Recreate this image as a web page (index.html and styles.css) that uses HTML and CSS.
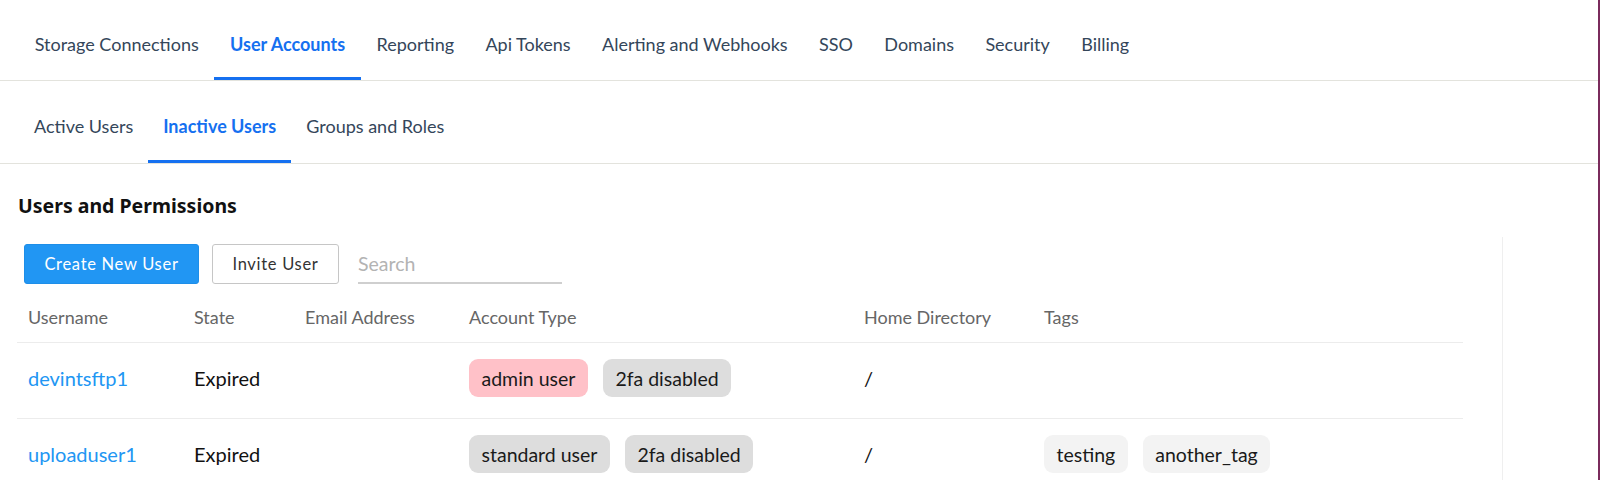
FILE: index.html
```html
<!DOCTYPE html>
<html lang="en">
<head>
<meta charset="utf-8">
<title>User Accounts</title>
<link rel="stylesheet" href="styles.css">
</head>
<body>
<div class="page">
  <div class="main">
    <nav class="tabs tabs-top">
      <a class="tab">Storage Connections</a>
      <a class="tab active">User Accounts</a>
      <a class="tab">Reporting</a>
      <a class="tab">Api Tokens</a>
      <a class="tab">Alerting and Webhooks</a>
      <a class="tab">SSO</a>
      <a class="tab">Domains</a>
      <a class="tab">Security</a>
      <a class="tab">Billing</a>
    </nav>
    <nav class="tabs tabs-sub">
      <a class="tab">Active Users</a>
      <a class="tab active">Inactive Users</a>
      <a class="tab">Groups and Roles</a>
    </nav>
    <section class="content">
      <h2 class="title">Users and Permissions</h2>
      <div class="panel">
        <div class="toolbar">
          <button class="btn btn-primary">Create New User</button>
          <button class="btn btn-outline">Invite User</button>
          <input class="search" type="text" placeholder="Search">
        </div>
        <table class="users">
          <colgroup>
            <col class="c-user"><col class="c-state"><col class="c-email"><col class="c-type"><col class="c-home"><col class="c-tags">
          </colgroup>
          <thead>
            <tr>
              <th>Username</th>
              <th>State</th>
              <th>Email Address</th>
              <th>Account Type</th>
              <th>Home Directory</th>
              <th>Tags</th>
            </tr>
          </thead>
          <tbody>
            <tr>
              <td><a class="user-link">devintsftp1</a></td>
              <td>Expired</td>
              <td></td>
              <td><div class="badges"><span class="badge badge-admin">admin user</span><span class="badge badge-grey">2fa disabled</span></div></td>
              <td>/</td>
              <td></td>
            </tr>
            <tr>
              <td><a class="user-link">uploaduser1</a></td>
              <td>Expired</td>
              <td></td>
              <td><div class="badges"><span class="badge badge-grey">standard user</span><span class="badge badge-grey">2fa disabled</span></div></td>
              <td>/</td>
              <td><div class="badges"><span class="badge badge-tag">testing</span><span class="badge badge-tag">another_tag</span></div></td>
            </tr>
          </tbody>
        </table>
      </div>
    </section>
  </div>
  <div class="edge"></div>
</div>
</body>
</html>
```
FILE: styles.css
```css
* { box-sizing: border-box; }

html, body {
  margin: 0;
  padding: 0;
  background: #ffffff;
}

body {
  font-family: "Lato", "Noto Sans", sans-serif;
  color: #111;
  height: 480px;
  overflow: hidden;
}

.page {
  display: flex;
  width: 1600px;
  height: 480px;
}

.main {
  flex: 1;
  min-width: 0;
}

.edge {
  width: 2px;
  background: #7a2b5c;
}

.tabs {
  display: flex;
  padding-left: 19px;
  border-bottom: 1px solid #e3e3dd;
}

.tabs-top { height: 81px; }
.tabs-sub { height: 83px; }

.tab {
  display: flex;
  align-items: center;
  padding: 11px 15px 0;
  border-bottom: 3px solid transparent;
  font-size: 18px;
  color: #34465a;
  white-space: nowrap;
  cursor: pointer;
}

.tabs-top .tab { padding: 11px 15.7px 0; }

.tab.active {
  color: #1570f0;
  font-weight: 700;
  border-bottom-color: #1570f0;
}

.content {
  padding-left: 17px;
}

.title {
  margin: 29px 0 18px 1px;
  font-family: "Noto Sans", sans-serif;
  font-weight: 700;
  font-size: 19.5px;
  line-height: 26px;
  color: #111;
}

.panel {
  width: 1486px;
  border-right: 1px solid #efefef;
  padding-top: 7px;
  min-height: 250px;
}

.toolbar {
  display: flex;
  align-items: center;
  margin-left: 7px;
  margin-bottom: 11px;
}

.btn {
  height: 40px;
  border-radius: 3px;
  font-family: "Lato", sans-serif;
  font-size: 16.5px;
  letter-spacing: 0.7px;
  cursor: pointer;
}

.btn-primary {
  width: 175px;
  background: #2196f3;
  border: 1px solid #1e8ee8;
  color: #fff;
}

.btn-outline {
  width: 127px;
  margin-left: 13px;
  background: #fff;
  border: 1px solid #c6c6c6;
  color: #333;
}

.search {
  margin-left: 19px;
  width: 204px;
  height: 40px;
  border: none;
  border-bottom: 2px solid #cfcfcf;
  padding: 0;
  font-family: "Lato", sans-serif;
  font-size: 19.5px;
  color: #333;
  outline: none;
  background: transparent;
}

.search::placeholder { color: #b3b3b3; }

.users {
  width: 1446px;
  border-collapse: collapse;
  table-layout: fixed;
}

.c-user { width: 166px; }
.c-state { width: 111px; }
.c-email { width: 164px; }
.c-type { width: 395px; }
.c-home { width: 180px; }
.c-tags { width: 430px; }

.users th {
  height: 47px;
  padding: 0 11px 2px;
  text-align: left;
  font-weight: 400;
  font-size: 18px;
  color: #666;
  border-bottom: 1px solid #ececec;
}

.users td {
  height: 76px;
  padding: 0 11px 4px;
  font-size: 20px;
  color: #111;
  border-bottom: 1px solid #ececec;
  vertical-align: middle;
}

.user-link {
  color: #2196f3;
  cursor: pointer;
}

.badges {
  display: flex;
  gap: 15px;
}

.badge {
  display: inline-flex;
  align-items: center;
  height: 38px;
  padding: 0 12.5px;
  border-radius: 9px;
  font-size: 19.5px;
  color: #1a1a1a;
  white-space: nowrap;
}

.badge-admin { background: #ffc1c8; }
.badge-grey { background: #dddddd; }
.badge-tag { background: #f3f3f3; }
```
